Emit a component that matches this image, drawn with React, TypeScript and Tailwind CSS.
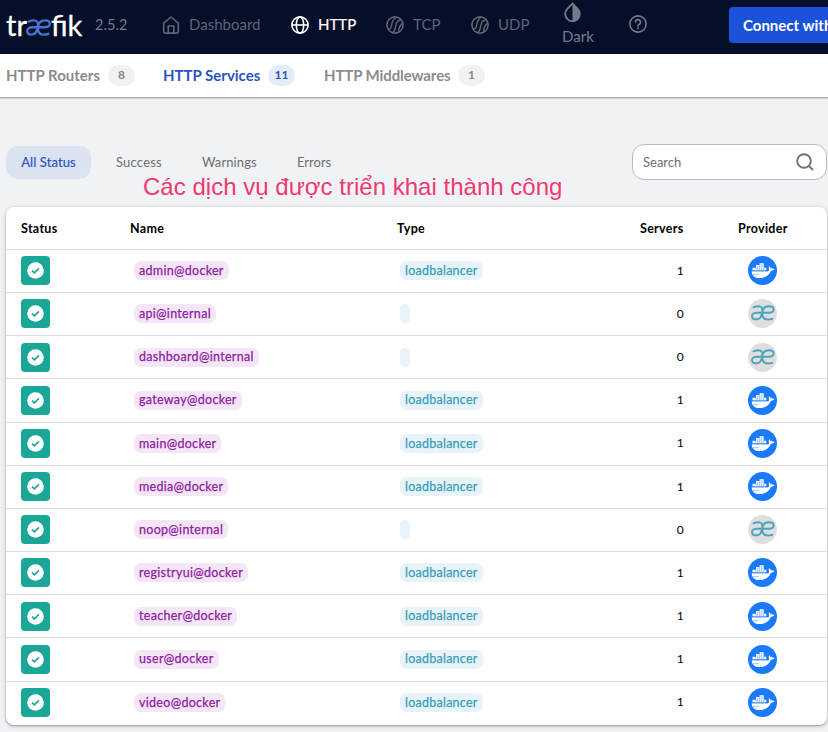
import React from "react";

type Service = { name: string; type: string; servers: number; provider: "docker" | "internal" };

const docker = (name: string): Service => ({ name: name + "@docker", type: "loadbalancer", servers: 1, provider: "docker" });
const internal = (name: string): Service => ({ name: name + "@internal", type: "", servers: 0, provider: "internal" });

const services: Service[] = [
  docker("admin"),
  internal("api"),
  internal("dashboard"),
  docker("gateway"),
  docker("main"),
  docker("media"),
  internal("noop"),
  docker("registryui"),
  docker("teacher"),
  docker("user"),
  docker("video"),
];

// The joined "ae" letter mark, shared by the logo and the provider badge.
const MARK =
  "M5.500 8.300C7.500 7.500 9 7.300 10.500 7.300 13.300 7.300 14.500 9 14.300 11.500 14 16.800 12.500 20.500 8 20.500 5.200 20.500 4 19.200 4 17.100 4 14.700 6 13.700 9 13.700H20.500C24 13.700 25.600 12.600 25.600 10.500 25.600 8.400 24.200 7.300 21.300 7.300 17 7.300 14.300 9.800 14.300 14.500 14.300 18.500 16.500 20.500 20 20.500 21.800 20.500 23 20.300 24.200 19.800";

function HomeIcon() {
  return (
    <svg className="h-[18px] w-[18px] shrink-0" viewBox="0 0 18 18" fill="none" stroke="currentColor" strokeWidth="1.6" strokeLinejoin="round">
      <path d="M1.700 7.200 9 1l7.300 6.200v8.400a1.500 1.500 0 0 1-1.500 1.500H3.200a1.500 1.500 0 0 1-1.500-1.500z" />
      <path d="M6.200 17V10h5.600v7" />
    </svg>
  );
}

function GlobeIcon() {
  return (
    <svg className="h-[18px] w-[18px] shrink-0" viewBox="0 0 18 18" fill="none" stroke="currentColor" strokeWidth="1.6">
      <circle cx="9" cy="9" r="8.1" />
      <ellipse cx="9" cy="9" rx="3.7" ry="8.1" />
      <path d="M1 9h16" />
    </svg>
  );
}

function ProtocolIcon() {
  return (
    <svg className="h-[18px] w-[18px] shrink-0" viewBox="0 0 18 18" fill="none" stroke="currentColor" strokeWidth="1.4" strokeLinecap="round">
      <circle cx="9" cy="9" r="8.1" strokeWidth="1.6" />
      <path d="M2 12.600C4.300 13.300 5.400 12 5.600 9.300 5.800 6 6.600 4.200 9.800 1.300" />
      <path d="M6.700 16.700C9.400 15 9.300 12 9.800 9.300 10.400 5.800 12.500 4 15.400 4" />
      <path d="M12.700 16C12.300 12.500 13.500 9.800 16.300 7.400" />
    </svg>
  );
}

function DropIcon() {
  return (
    <svg className="h-5 w-[17px]" viewBox="0 0 17 20" fill="none">
      <path d="M8.500 1.600 3.300 6.900a7.300 7.300 0 1 0 10.400 0z" stroke="currentColor" strokeWidth="1.800" />
      <path d="M8.500 1.600v17.600a7.300 7.300 0 0 0 5.200-12.300z" fill="currentColor" />
    </svg>
  );
}

function HelpIcon() {
  return (
    <svg className="h-[18px] w-[18px]" viewBox="0 0 18 18" fill="none" stroke="currentColor" strokeWidth="1.600">
      <circle cx="9" cy="9" r="8.100" />
      <path d="M6.500 7.100a2.500 2.500 0 1 1 3.700 2.200c-.9.5-1.200.8-1.200 1.800" strokeLinecap="round" />
      <circle cx="9" cy="13.200" r="1" fill="currentColor" stroke="none" />
    </svg>
  );
}

function DockerIcon() {
  return (
    <svg className="h-[29px] w-[29px]" viewBox="0 0 29 29">
      <circle cx="14.500" cy="14.500" r="14.500" fill="#1a7af8" />
      <path
        d="M3.800 15.200h15.400c1.500 0 2-.8 1.800-2-.5-.8-.4-1.900.4-2.900.9.700 1.200 1.400 1.200 2.200 1.100-.4 2.500-.2 3.800.5-.8 1.300-2 1.700-3.500 1.800-1.700 4.700-5.600 7.300-11.400 7.300-5.200 0-7.800-2.800-7.700-6.900z"
        fill="#fff"
      />
      <path d="M4.500 11.700h3.500V9h3.600V7.200h4.100v4.500h2.600v2.900H4.500z" fill="#fff" />
      <path d="M8 11.900v2.400M9.900 9.600v4.700M11.800 8.500v5.800M13.800 8v6.300M15.700 11.900v2.400" stroke="#1a7af8" strokeWidth=".5" />
      <path d="M3.600 14.900h17" stroke="#1a7af8" strokeWidth=".5" />
      <path d="M5 18.600c2.200.4 4.300.2 5.700-.5" stroke="#1a7af8" strokeWidth=".5" fill="none" />
    </svg>
  );
}

function TraefikIcon() {
  return (
    <svg className="h-[29px] w-[29px]" viewBox="0 0 29 29">
      <circle cx="14.500" cy="14.500" r="14.400" fill="#dedede" />
      <path d={MARK} fill="none" stroke="#4aa5bd" strokeWidth="1.900" strokeLinecap="round" />
    </svg>
  );
}

function StatusIcon() {
  return (
    <span className="flex h-[29px] w-[29px] items-center justify-center rounded-[4px] bg-[#1aa797]">
      <svg className="h-[17px] w-[17px]" viewBox="0 0 17 17">
        <circle cx="8.500" cy="8.500" r="8.300" fill="#fff" />
        <path d="m5 8.600 2.400 2.300 4.500-4.600" fill="none" stroke="#1aa797" strokeWidth="1.700" />
      </svg>
    </span>
  );
}

function Logo() {
  return (
    <div className="flex h-[54px] w-[88px] shrink-0 items-center pb-[5px] pl-[6px] text-[29px] leading-none text-white [-webkit-text-stroke:0.3px]">
      <span className="w-[20px]">tr</span>
      <svg className="mt-[6px] h-[17px] w-[25px]" viewBox="2.800 6 24 15.800" preserveAspectRatio="none">
        <path d={MARK} fill="none" stroke="#4a72cc" strokeWidth="2.200" strokeLinecap="round" />
      </svg>
      <span>fik</span>
    </div>
  );
}

function Count({ value, active = false }: { value: number; active?: boolean }) {
  return (
    <span className={"flex h-[21px] w-[27px] items-center justify-center rounded-full text-[12px] font-bold tracking-normal " + (active ? "bg-[#e5ebf9] text-[#2a55bd]" : "bg-[#f1f1f1] text-[#858585]")}>
      {value}
    </span>
  );
}

export default function App() {
  return (
    <div className="relative h-[732px] w-[828px] overflow-hidden bg-[#f0f2f5] font-['Lato','Noto_Sans',sans-serif] text-black">
      <header className="flex h-[54px] items-center bg-[#050f29] text-[15px] text-[#5e6475]">
        <Logo />
        <span className="w-[74px] shrink-0 pb-[5px] pl-[7px] text-[14.500px] tracking-[0.100px] text-[#747a88]">2.5.2</span>
        <nav className="flex shrink-0 items-center pb-[5px]">
          <a className="flex w-[129px] items-center gap-[9px]"><HomeIcon />Dashboard</a>
          <a className="flex w-[95px] items-center gap-[9px] text-white [-webkit-text-stroke:0.200px]"><GlobeIcon />HTTP</a>
          <a className="flex w-[85px] items-center gap-[9px]"><ProtocolIcon />TCP</a>
          <a className="flex w-[91px] items-center gap-[9px]"><ProtocolIcon />UDP</a>
        </nav>
        <div className="flex h-[54px] w-[67px] shrink-0 flex-col pt-[2px] text-[#747a88]">
          <span className="pl-[2px]"><DropIcon /></span>
          <span className="pt-[4px] leading-5">Dark</span>
        </div>
        <span className="w-[100px] shrink-0 pb-[6px] text-[#747a88]"><HelpIcon /></span>
        <button className="mb-[4px] h-9 w-[180px] shrink-0 rounded-[4px] bg-[#1a52d9] pl-[14px] text-left text-[15px] font-bold whitespace-nowrap text-white">
          Connect with
        </button>
      </header>

      <nav className="flex h-11 items-center border-b border-[#a9abae] bg-white pb-px pl-[6px] text-[15px] font-bold text-[#8b8b8b] shadow-[0_1px_1px_rgba(0,0,0,0.12)]">
        <a className="flex w-[157px] items-center"><span className="w-[102px]">HTTP Routers</span><Count value={8} /></a>
        <a className="flex w-[161px] items-center text-[#2a55bd]"><span className="w-[105px]">HTTP Services</span><Count value={11} active /></a>
        <a className="flex items-center"><span className="w-[134px] tracking-[-0.100px]">HTTP Middlewares</span><Count value={1} /></a>
      </nav>

      <main className="pt-[46px] pl-[6px]">
        <div className="flex h-9 items-center text-[13px] text-[#6d6f71]">
          <button className="h-[33px] w-[85px] rounded-[12px] bg-[#dbe3f1] pt-[2px] tracking-[0.100px] text-[#2a55bd] [-webkit-text-stroke:0.200px]">All Status</button>
          <span className="w-[86px] pt-[2px] pl-[25px] tracking-[0.200px]">Success</span>
          <span className="w-[95px] pt-[2px] pl-[25px] tracking-[0.100px]">Warnings</span>
          <span className="w-[360px] pt-[2px] pl-[25px]">Errors</span>
          <label className="flex h-9 w-[195px] items-center justify-between rounded-[12px] border border-[#babbbd] bg-white pr-[12px] pl-[10px]">
            <span className="pt-[2px]">Search</span>
            <svg className="h-[18px] w-[18px]" viewBox="0 0 18 18" fill="none" stroke="#717171" strokeWidth="1.900">
              <circle cx="8" cy="8" r="6.800" />
              <path d="m13 13 4.100 4.100" />
            </svg>
          </label>
        </div>

        <section className="mt-[27px] h-[518px] w-[821px] rounded-[8px] bg-white text-[12.500px] tracking-[0.300px] shadow-[0_1px_4px_rgba(0,0,0,0.25),0_1px_1px_rgba(0,0,0,0.2)]">
          <div className="flex h-[42px] items-center pt-[2px] pl-[15px] font-bold">
            <span className="w-[109px]">Status</span>
            <span className="w-[267px]">Name</span>
            <span className="w-[243px]">Type</span>
            <span className="w-[98px]">Servers</span>
            <span>Provider</span>
          </div>
          {services.map((service) => (
            <div key={service.name} className="flex h-[43.170px] items-center border-t border-[#dedede] pb-[0.500px] pl-[15px]">
              <span className="w-[113px]"><StatusIcon /></span>
              <span className="flex w-[266px]">
                <span className="inline-flex h-[19px] items-center rounded-[7px] bg-[#f4e6f6] px-[5px] pt-[1px] text-[#8f20a3] [-webkit-text-stroke:0.250px]">{service.name}</span>
              </span>
              <span className="flex w-[239px]">
                <span className="inline-flex h-[19px] items-center rounded-[7px] bg-[#e7f3f9] px-[5px] pt-[1px] tracking-[0.250px] text-[#3a9fb7] [-webkit-text-stroke:0.250px]">{service.type}</span>
              </span>
              <span className="w-[45px] text-right text-[12px]">{service.servers}</span>
              <span className="pl-[64px]">{service.provider === "docker" ? <DockerIcon /> : <TraefikIcon />}</span>
            </div>
          ))}
        </section>
      </main>

      <p className="absolute top-[173px] left-[143px] font-['Liberation_Sans',sans-serif] text-[24px] leading-7 tracking-[0.020px] whitespace-nowrap text-[#ed3a70]">
        Các dịch vụ được triển khai thành công
      </p>
    </div>
  );
}
